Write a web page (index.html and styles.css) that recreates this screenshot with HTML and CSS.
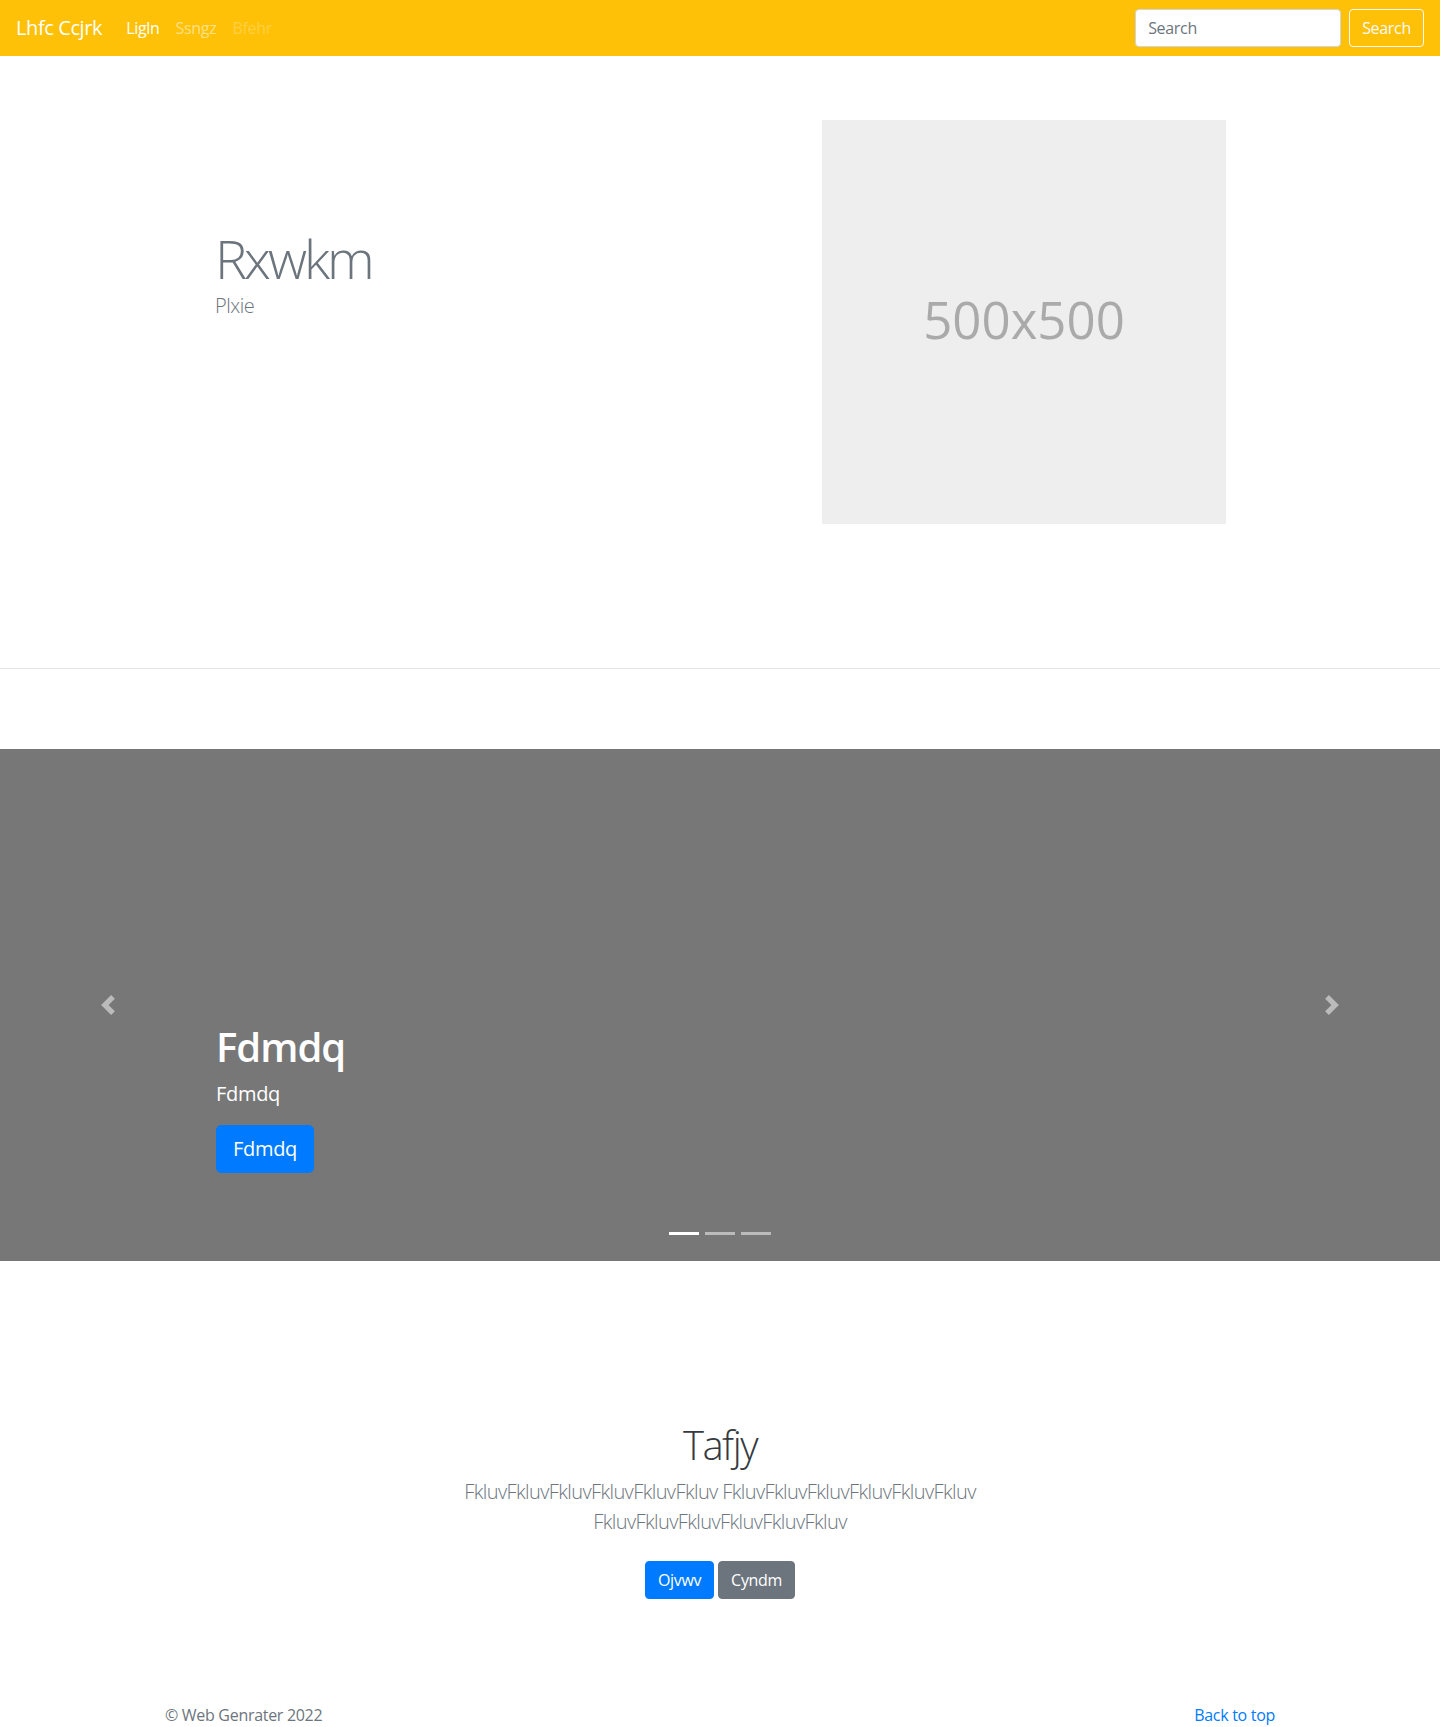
FILE: index.html
```html
<!DOCTYPE html>
<html lang="en">
<head>
    <meta charset="UTF-8">
    <meta name="viewport" content="width=device-width, initial-scale=1.0">
    <title>Lhfc Ccjrk</title>
    <link rel="stylesheet" href="styles.css">
</head>
<body>
    <nav class="navbar">
        <a href="#" class="brand">Lhfc Ccjrk</a>
        <ul class="nav-links">
            <li><a href="#" class="active">Ligln</a></li>
            <li><a href="#">Ssngz</a></li>
            <li><a href="#" class="disabled">Bfehr</a></li>
        </ul>
        <form class="search-form">
            <input type="text" placeholder="Search">
            <button type="button">Search</button>
        </form>
    </nav>

    <div class="hero">
        <div class="hero-text">
            <h1>Rxwkm</h1>
            <p>Plxie</p>
        </div>
        <div class="placeholder">500x500</div>
    </div>

    <hr class="divider">

    <div class="carousel">
        <div class="slide"></div>
        <ol class="indicators">
            <li class="active"></li>
            <li></li>
            <li></li>
        </ol>
        <div class="caption">
            <h1>Fdmdq</h1>
            <p class="caption-text">Fdmdq</p>
            <p><a href="#" class="btn btn-primary btn-lg">Fdmdq</a></p>
        </div>
        <a href="#" class="control control-prev">
            <svg width="20" height="20" viewBox="0 0 8 8" fill="#fff"><path d="M5.25 0l-4 4 4 4 1.5-1.5L4.25 4l2.5-2.5L5.25 0z"/></svg>
        </a>
        <a href="#" class="control control-next">
            <svg width="20" height="20" viewBox="0 0 8 8" fill="#fff"><path d="M2.75 0l-1.5 1.5L3.75 4l-2.5 2.5L2.75 8l4-4-4-4z"/></svg>
        </a>
    </div>

    <section class="jumbotron">
        <div class="jumbo-inner">
            <h1>Tafjy</h1>
            <p class="lead">FkluvFkluvFkluvFkluvFkluvFkluv FkluvFkluvFkluvFkluvFkluvFkluv FkluvFkluvFkluvFkluvFkluvFkluv</p>
            <p class="actions">
                <a href="#" class="btn btn-primary">Ojvwv</a>
                <a href="#" class="btn btn-secondary">Cyndm</a>
            </p>
        </div>
    </section>

    <footer>
        <div class="footer-inner">
            <p class="to-top"><a href="#">Back to top</a></p>
            <p>&copy; Web Genrater 2022</p>
        </div>
    </footer>
</body>
</html>
```

FILE: styles.css
```css
* {
    margin: 0;
    padding: 0;
    box-sizing: border-box;
}
body {
    font-family: "Open Sans", "Noto Sans", sans-serif;
    font-size: 16px;
    line-height: 1.5;
    letter-spacing: -0.3px;
    color: #212529;
    background: #fff;
}
a {
    text-decoration: none;
}

/* navbar */
.navbar {
    display: flex;
    align-items: center;
    height: 56px;
    padding: 8px 16px;
    background: #ffc107;
}
.brand {
    font-size: 20px;
    line-height: 30px;
    letter-spacing: -0.4px;
    color: #fff;
    margin-right: 16px;
}
.nav-links {
    display: flex;
    list-style: none;
    flex: 1;
}
.nav-links a {
    display: block;
    padding: 8px;
    color: rgba(255, 255, 255, 0.5);
}
.nav-links a.active {
    color: #fff;
}
.nav-links a.disabled {
    color: rgba(255, 255, 255, 0.25);
}
.search-form {
    display: flex;
}
.search-form input {
    width: 206px;
    height: 38px;
    padding: 6px 12px;
    font-family: inherit;
    font-size: 16px;
    letter-spacing: -0.3px;
    color: #495057;
    border: 1px solid #ced4da;
    border-radius: 4px;
    margin-right: 8px;
}
.search-form input::placeholder {
    color: #6c757d;
}
.search-form button {
    height: 38px;
    padding: 6px 12px;
    font-family: inherit;
    font-size: 16px;
    letter-spacing: -0.3px;
    color: #f8f9fa;
    background: transparent;
    border: 1px solid #f8f9fa;
    border-radius: 4px;
}

/* hero */
.hero {
    display: flex;
    justify-content: space-between;
    max-width: 1140px;
    margin: 0 auto;
    padding: 64px 64px 144px 65px;
}
.hero-text {
    padding-top: 106px;
    color: #6c757d;
}
.hero-text h1 {
    font-size: 54px;
    font-weight: 300;
    line-height: 1.2;
    letter-spacing: -3px;
}
.hero-text p {
    font-size: 20px;
    font-weight: 300;
    letter-spacing: -0.5px;
}
.placeholder {
    width: 404px;
    height: 404px;
    padding-bottom: 6px;
    background: #eee;
    color: #aaa;
    font-size: 51px;
    letter-spacing: 0;
    display: flex;
    align-items: center;
    justify-content: center;
}
.divider {
    border: 0;
    border-top: 1px solid rgba(0, 0, 0, 0.1);
    margin-bottom: 80px;
}

/* carousel */
.carousel {
    position: relative;
    margin-bottom: 64px;
}
.slide {
    height: 512px;
    background: #777;
}
.caption {
    position: absolute;
    left: 15%;
    right: 15%;
    bottom: 52px;
    padding: 20px 0;
    color: #fff;
    z-index: 10;
}
.caption h1 {
    font-size: 40px;
    font-weight: 600;
    line-height: 1.2;
    letter-spacing: -1px;
    margin-bottom: 8px;
}
.caption p {
    margin-bottom: 16px;
}
.caption .caption-text {
    font-size: 20px;
}
.control {
    position: absolute;
    top: 0;
    bottom: 0;
    width: 15%;
    display: flex;
    align-items: center;
    justify-content: center;
    opacity: 0.5;
}
.control-prev {
    left: 0;
}
.control-next {
    right: 0;
}
.indicators {
    position: absolute;
    left: 0;
    right: 0;
    bottom: 0;
    display: flex;
    justify-content: center;
    list-style: none;
    margin-bottom: 16px;
    z-index: 15;
}
.indicators li {
    width: 30px;
    height: 3px;
    margin: 10px 3px;
    background: #fff;
    opacity: 0.5;
}
.indicators li.active {
    opacity: 1;
}

/* buttons */
.btn {
    display: inline-block;
    padding: 6px 12px;
    font-size: 16px;
    line-height: 1.5;
    color: #fff;
    border: 1px solid transparent;
    border-radius: 4px;
    vertical-align: middle;
}
.btn-lg {
    padding: 8px 16px;
    font-size: 20px;
    border-radius: 5px;
}
.btn-primary {
    background: #007bff;
    border-color: #007bff;
}
.btn-secondary {
    background: #6c757d;
    border-color: #6c757d;
}

/* jumbotron */
.jumbotron {
    padding: 96px 0 48px;
    text-align: center;
}
.jumbo-inner {
    max-width: 640px;
    margin: 0 auto;
    padding: 0 15px;
}
.jumbotron h1 {
    font-size: 40px;
    font-weight: 300;
    line-height: 1.2;
    letter-spacing: -1.5px;
    color: #343a40;
    margin-bottom: 8px;
}
.jumbotron .lead {
    font-size: 20px;
    font-weight: 300;
    letter-spacing: -0.6px;
    color: #6c757d;
    margin-bottom: 16px;
}
.actions .btn {
    margin: 8px 0;
}

/* footer */
footer {
    padding: 48px 0;
    color: #6c757d;
}
.footer-inner {
    max-width: 1140px;
    margin: 0 auto;
    padding: 0 15px;
}
.footer-inner p {
    margin-bottom: 16px;
}
.to-top {
    float: right;
}
.to-top a {
    color: #007bff;
}
```
